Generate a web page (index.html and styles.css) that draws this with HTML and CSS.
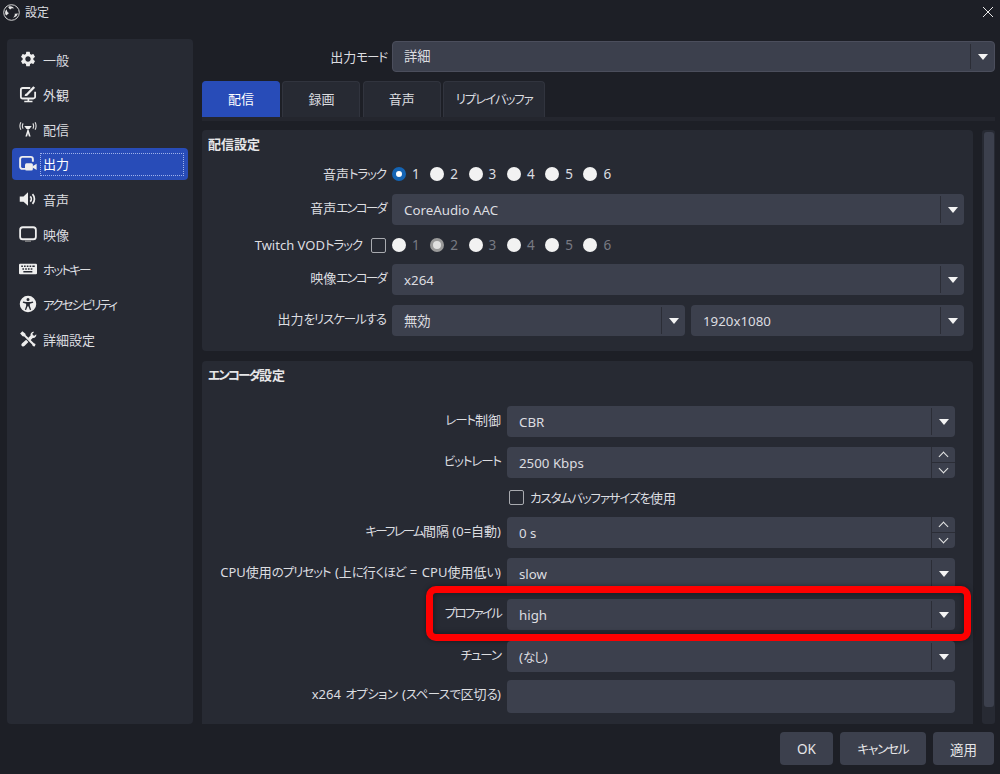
FILE: index.html
```html
<!DOCTYPE html>
<html lang="ja">
<head>
<meta charset="utf-8">
<title>設定</title>
<link rel="stylesheet" href="styles.css">
</head>
<body>
<div class="window">
  <header class="titlebar">
    <svg class="logo" viewBox="0 0 24 24"><circle cx="12" cy="12" r="11" fill="#1d1f26" stroke="#e6e6e6" stroke-width="1.300"/><path d="M7.500 3.800c3.400-1.500 7-.2 8.400 2.800-2-1.200-4.400-.8-5.700 1-1.300-.8-2.500-2-2.700-3.800z" fill="#e6e6e6"/><path d="M20.800 13.200c-.4 3.700-3.400 6.200-6.700 5.800 2.100-1.100 3.100-3.400 2.400-5.500 1.500.5 3.100.4 4.300-.3z" fill="#e6e6e6"/><path d="M4.300 16.300c-2.300-3-1.500-6.900 1.100-8.800-.3 2.400.9 4.600 3 5.300-1.200 1.200-2.300 2.600-4.100 3.500z" fill="#e6e6e6"/></svg>
    <span class="title">設定</span>
    <svg class="close" viewBox="0 0 12 12"><path d="M1 1l10 10M11 1L1 11" stroke="#e8e8e8" stroke-width="1" fill="none"/></svg>
  </header>

  <div class="main">
    <nav class="sidebar">
      <div class="nav-item"><svg class="nav-icon" viewBox="0 0 24 24"><path fill="#eee" d="M19.140 12.940c.04-.3.06-.61.06-.94 0-.32-.02-.64-.07-.94l2.030-1.580a.49.49 0 0 0 .12-.61l-1.920-3.320a.488.488 0 0 0-.59-.22l-2.390.96c-.5-.38-1.030-.7-1.620-.94l-.36-2.540a.484.484 0 0 0-.48-.41h-3.840c-.24 0-.43.17-.47.41l-.36 2.540c-.59.24-1.130.57-1.620.94l-2.390-.96c-.22-.08-.47 0-.59.22L2.740 8.870c-.12.21-.08.47.12.61l2.030 1.580c-.05.3-.09.63-.09.94s.02.64.07.94l-2.030 1.580a.49.49 0 0 0-.12.61l1.920 3.320c.12.22.37.29.59.22l2.390-.96c.5.38 1.030.7 1.620.94l.36 2.540c.05.24.24.41.48.41h3.840c.24 0 .44-.17.47-.41l.36-2.540c.59-.24 1.130-.56 1.620-.94l2.390.96c.22.08.47 0 .59-.22l1.920-3.320c.12-.22.07-.47-.12-.61l-2.010-1.580zM12 15.600c-1.980 0-3.600-1.620-3.600-3.600s1.620-3.600 3.600-3.600 3.600 1.620 3.600 3.600-1.620 3.600-3.600 3.600z"/></svg><span>一般</span></div>
      <div class="nav-item"><svg class="nav-icon" viewBox="0 0 24 24"><path d="M15 4H5a2.500 2.500 0 0 0-2.500 2.500v9A2.500 2.500 0 0 0 5 18h14a2.500 2.500 0 0 0 2.500-2.500V9" fill="none" stroke="#eee" stroke-width="2.400"/><path d="M7 22h11M12.500 18v3" stroke="#eee" stroke-width="2.200"/><path d="M7.500 14.500c.2-2 1-3 2.400-3.200L19 1.500l2.500 2.300-9.500 9.600c-.5 1-2.500 1.600-4.500 1.100z" fill="#eee"/></svg><span>外観</span></div>
      <div class="nav-item"><svg class="nav-icon" viewBox="0 0 24 24"><path d="M12 10.500 8.500 22h2.300l1.200-4.500 1.200 4.500h2.300z" fill="#eee"/><path d="M7 8h10l-3 4h-4z" fill="#eee"/><path d="M5.500 4.500a7 7 0 0 0 0 7M18.500 4.500a7 7 0 0 1 0 7M2.500 3a11 11 0 0 0 0 10M21.500 3a11 11 0 0 1 0 10" fill="none" stroke="#ddd" stroke-width="1.500"/></svg><span>配信</span></div>
      <div class="nav-item active"><svg class="nav-icon" viewBox="0 0 24 24"><path d="M8.500 18.500H4.500a3 3 0 0 1-3-3V5.500a3 3 0 0 1 3-3h11a3 3 0 0 1 3 3V9" fill="none" stroke="#eee" stroke-width="2.600"/><rect x="8" y="11" width="10.500" height="9.500" rx="2" fill="#eee"/><path d="M18 15l5.500-3.500v8.500L18 16.500z" fill="#eee"/></svg><span class="focus-box">出力</span></div>
      <div class="nav-item"><svg class="nav-icon" viewBox="0 0 24 24"><path d="M1 8.500H6L12 3v18l-6-5.500H1z" fill="#eee"/><path d="M15 8.500a5 5 0 0 1 0 7M18 5.500a9.500 9.500 0 0 1 0 13" fill="none" stroke="#eee" stroke-width="2.300"/></svg><span>音声</span></div>
      <div class="nav-item"><svg class="nav-icon" viewBox="0 0 24 24"><rect x="1.500" y="3" width="21" height="16" rx="3.500" fill="none" stroke="#eee" stroke-width="2.400"/><path d="M8 21.500h8" stroke="#999" stroke-width="1.500"/></svg><span>映像</span></div>
      <div class="nav-item"><svg class="nav-icon" viewBox="0 0 24 24"><path fill-rule="evenodd" d="M1.500 5h21A1.500 1.500 0 0 1 24 6.500v11a1.500 1.500 0 0 1-1.500 1.500h-21A1.500 1.500 0 0 1 0 17.500v-11A1.500 1.500 0 0 1 1.500 5zm1.500 2.300v2h2.200v-2zm3.700 0v2h2.200v-2zm3.700 0v2h2.200v-2zm3.700 0v2h2.200v-2zm3.700 0v2H21v-2zM4.500 11v2h2.200v-2zm3.700 0v2h2.200v-2zm3.700 0v2h2.200v-2zm3.700 0v2h2.200v-2zm-9.800 3.800v1.800h12v-1.800z" fill="#eee"/></svg><span><span class="kn">ホットキー</span></span></div>
      <div class="nav-item"><svg class="nav-icon" viewBox="0 0 24 24"><path fill-rule="evenodd" d="M12 1a11 11 0 1 1 0 22 11 11 0 0 1 0-22zm0 3a2 2 0 1 0 0 4 2 2 0 0 0 0-4zM5.500 8.500 5 10.200l4.500 1.300v3l-1.700 5 1.600.6L11.500 15h1l2.100 5.100 1.600-.6-1.700-5v-3l4.500-1.300-.5-1.700c-4.500 1.200-8 1.200-12.500 0z" fill="#eee"/></svg><span><span class="kn">アクセシビリティ</span></span></div>
      <div class="nav-item"><svg class="nav-icon" viewBox="0 0 24 24"><path d="M4.500 1.500 1.500 4.500l3.300 3.800 2.200.3L17.500 19.300c.3 1.700 1.900 3.100 3.700 2.500l.9-3-2.200-1L9 7 8.500 5z" fill="#eee"/><path d="M23 5.500c.6 2.800-1.700 5.500-4.700 5l-3 3-3.100-3 3.200-3.200c-.6-2.800 2-5.500 4.800-4.800l-2.300 2.300.6 2.200 2.200.6zM9.500 13l3 3-4.900 5.100c-1.100 1.200-2.600 1.300-3.700.3-1.100-1.100-1-2.600.3-3.800z" fill="#eee"/></svg><span>詳細設定</span></div>
    </nav>

    <section class="content">
      <div class="mode-row">
        <label class="mode-label">出力<span class="k">モード</span></label>
        <div class="select select-main"><span class="select-text">詳細</span><span class="select-btn"><i class="arrow"></i></span></div>
      </div>

      <div class="tabs">
        <div class="tab tab-active">配信</div>
        <div class="tab">録画</div>
        <div class="tab">音声</div>
        <div class="tab tab-wide"><span class="k">リプレイバッファ</span></div>
      </div>
      <div class="tab-line"></div>

      <div class="pane">
        <div class="panels">
          <div class="panel panel-stream">
            <h2 class="panel-title">配信設定</h2>
            <div class="rows">
              <div class="row row-radio">
                <div class="row-label">音声<span class="k">トラック</span></div>
                <div class="radios">
                  <span class="radio-item"><i class="radio radio-on"></i>1</span>
                  <span class="radio-item"><i class="radio"></i>2</span>
                  <span class="radio-item"><i class="radio"></i>3</span>
                  <span class="radio-item"><i class="radio"></i>4</span>
                  <span class="radio-item"><i class="radio"></i>5</span>
                  <span class="radio-item"><i class="radio"></i>6</span>
                </div>
              </div>
              <div class="row">
                <div class="row-label">音声<span class="kn">エンコーダ</span></div>
                <div class="select"><span class="select-text">CoreAudio AAC</span><span class="select-btn"><i class="arrow"></i></span></div>
              </div>
              <div class="row row-radio row-twitch">
                <div class="row-label">Twitch VOD<span class="k">トラック</span><i class="checkbox"></i></div>
                <div class="radios radios-off">
                  <span class="radio-item"><i class="radio"></i>1</span>
                  <span class="radio-item"><i class="radio radio-dis"></i>2</span>
                  <span class="radio-item"><i class="radio"></i>3</span>
                  <span class="radio-item"><i class="radio"></i>4</span>
                  <span class="radio-item"><i class="radio"></i>5</span>
                  <span class="radio-item"><i class="radio"></i>6</span>
                </div>
              </div>
              <div class="row">
                <div class="row-label">映像<span class="kn">エンコーダ</span></div>
                <div class="select"><span class="select-text">x264</span><span class="select-btn"><i class="arrow"></i></span></div>
              </div>
              <div class="row">
                <div class="row-label">出力<span class="k">をリスケールする</span></div>
                <div class="field-pair">
                  <div class="select select-half"><span class="select-text">無効</span><span class="select-btn"><i class="arrow"></i></span></div>
                  <div class="select select-res"><span class="select-text">1920x1080</span><span class="select-btn"><i class="arrow"></i></span></div>
                </div>
              </div>
            </div>
          </div>

          <div class="panel panel-encoder">
            <h2 class="panel-title"><span class="kn">エンコーダ</span>設定</h2>
            <div class="rows">
              <div class="row">
                <div class="row-label"><span class="k">レート</span>制御</div>
                <div class="select"><span class="select-text">CBR</span><span class="select-btn"><i class="arrow"></i></span></div>
              </div>
              <div class="row">
                <div class="row-label"><span class="k">ビットレート</span></div>
                <div class="select"><span class="select-text">2500 Kbps</span><span class="spin"><span class="spin-btn"><i class="chev chev-up"></i></span><span class="spin-btn"><i class="chev chev-down"></i></span></span></div>
              </div>
              <div class="row row-check">
                <div class="row-label"></div>
                <div class="check-field"><i class="checkbox"></i><span><span class="k">カスタムバッファサイズを</span>使用</span></div>
              </div>
              <div class="row">
                <div class="row-label"><span class="kn">キーフレーム</span>間隔 (0=自動)</div>
                <div class="select"><span class="select-text">0 s</span><span class="spin"><span class="spin-btn"><i class="chev chev-up"></i></span><span class="spin-btn"><i class="chev chev-down"></i></span></span></div>
              </div>
              <div class="row">
                <div class="row-label spaced">CPU使用<span class="k">のプリセット</span> (上<span class="k">に</span>行<span class="k">くほど</span> = CPU使用低<span class="k">い</span>)</div>
                <div class="select"><span class="select-text">slow</span><span class="select-btn"><i class="arrow"></i></span></div>
              </div>
              <div class="row row-profile">
                <div class="row-label"><span class="kn">プロファイル</span></div>
                <div class="select"><span class="select-text">high</span><span class="select-btn"><i class="arrow"></i></span></div>
                <div class="highlight"></div>
              </div>
              <div class="row row-tune">
                <div class="row-label"><span class="k">チューン</span></div>
                <div class="select"><span class="select-text">(<span class="k">なし</span>)</span><span class="select-btn"><i class="arrow"></i></span></div>
              </div>
              <div class="row row-options">
                <div class="row-label spaced">x264 <span class="kw">オプション</span> (<span class="kw">スペースで</span>区切<span class="kw">る</span>)</div>
                <div class="text-input"></div>
              </div>
            </div>
          </div>
        </div>
        <div class="scrollbar"><div class="scroll-thumb"></div></div>
      </div>
    </section>
  </div>

  <footer class="footer">
    <button class="btn btn-ok">OK</button>
    <button class="btn btn-cancel"><span class="k">キャンセル</span></button>
    <button class="btn btn-apply">適用</button>
  </footer>
</div>
</body>
</html>
```

FILE: styles.css
```css
* { box-sizing: border-box; }

html, body {
  margin: 0;
  padding: 0;
  height: 774px;
  overflow: hidden;
  background: #1d1f26;
}

body {
  font-family: "Noto Sans", "Noto Sans CJK JP", sans-serif;
  font-size: 13px;
  font-feature-settings: "palt";
  color: #dcdde0;
}

/* Narrow kana runs */
.k { font-size: 12.5px; letter-spacing: -1.1px; }
.kn { font-size: 12.5px; letter-spacing: -1.8px; }
.kw { font-size: 12.5px; letter-spacing: -.6px; }
.spaced { word-spacing: 1.200px; }

.window {
  width: 1000px;
  height: 774px;
  display: flex;
  flex-direction: column;
}

.titlebar {
  height: 24px;
  flex: none;
  display: flex;
  align-items: center;
  padding: 0 6px 0 3px;
}

.logo { width: 17px; height: 17px; margin-right: 5px; }
.title { font-size: 12px; }
.close { width: 12px; height: 12px; margin-left: auto; margin-right: 0; }

.main {
  height: 685px;
  margin-top: 15px;
  flex: none;
  display: flex;
  padding: 0 5px 0 7px;
}

.sidebar {
  width: 186px;
  flex: none;
  background: #272a33;
  border-radius: 4px;
  padding: 4px 5px;
}

.nav-item {
  height: 32px;
  margin-bottom: 3px;
  display: flex;
  align-items: center;
  padding-left: 7px;
  border-radius: 4px;
  color: #dcdde0;
}

.nav-icon { width: 18px; height: 18px; flex: none; margin-right: 6px; }

.active { background: #284cb8; padding-right: 4px; color: #fff; }

.focus-box {
  flex: 1;
  height: 23px;
  line-height: 21px;
  margin-left: -3px;
  padding-left: 2px;
  border: 1px dotted #9fb2ea;
}

.content {
  flex: 1;
  margin-left: 9px;
  padding-top: 2px;
  min-width: 0;
}

.mode-row { display: flex; align-items: center; height: 31px; }
.mode-label { width: 185px; text-align: right; margin-right: 5px; }

.select {
  flex: 1;
  height: 31px;
  display: flex;
  background: #3c404d;
  border-radius: 4px;
  min-width: 0;
}

.select-main { border: 1px solid #4b4e5c; }
.select-text { flex: 1; padding-left: 12px; line-height: 32px; font-size: 13.300px; }
.select-main .select-text { padding-left: 11px; line-height: 28px; }

.select-btn {
  width: 24px;
  flex: none;
  border-left: 1px solid #2b2d36;
  margin: 2px 0;
  display: flex;
  align-items: center;
  justify-content: center;
}

.arrow {
  width: 0;
  height: 0;
  border-left: 5px solid transparent;
  border-right: 5px solid transparent;
  border-top: 6px solid #f4f4f4;
}

.spin {
  width: 24px;
  flex: none;
  border-left: 1px solid #2b2d36;
  display: flex;
  flex-direction: column;
}

.spin-btn {
  flex: 1;
  display: flex;
  align-items: center;
  justify-content: center;
}

.spin-btn:first-child { border-bottom: 1px solid #2b2d36; }

.chev {
  width: 7px;
  height: 7px;
  border-left: 1.500px solid #e6e6e6;
  border-top: 1.500px solid #e6e6e6;
}

.chev-up { transform: translateY(2px) rotate(45deg); }
.chev-down { transform: translateY(-2px) rotate(225deg); }

.tabs { display: flex; margin-top: 9px; height: 36px; }

.tab {
  width: 78px;
  margin-right: 2.400px;
  background: #272a33;
  border: 1px solid #31343e;
  border-bottom: 0;
  border-radius: 4px 4px 0 0;
  text-align: center;
  line-height: 35px;
}

.tab-active { background: #284cb8; border-color: #284cb8; color: #fff; }
.tab-wide { width: 102px; }

.tab-line { height: 4px; background: #24262e; }

.pane {
  margin-top: 9px;
  height: 594px;
  display: flex;
}

.panels {
  width: 771px;
  flex: none;
  display: flex;
  flex-direction: column;
  gap: 10px;
}

.panel { background: #272a33; border-radius: 4px; }
.panel-stream { height: 221px; }
.panel-encoder { height: 363px; border-radius: 4px 4px 0 0; }

.panel-title {
  margin: 0;
  padding-left: 6px;
  font-size: 13px;
  font-weight: 700;
  line-height: 28px;
  color: #e6e6e8;
}

.panel-stream .panel-title { height: 34px; }
.panel-encoder .panel-title { height: 45px; }

.rows { display: flex; flex-direction: column; gap: 10px; }

.row { display: flex; position: relative; height: 31px; }

.row-label {
  flex: none;
  width: 184px;
  margin-right: 6px;
  text-align: right;
  line-height: 29px;
  white-space: nowrap;
}

.panel-stream .row { padding-right: 9px; }
.panel-encoder .row { padding-right: 18px; }
.panel-encoder .row-label { width: 299px; }

.row-radio { height: 20px; }
.row-radio .row-label { line-height: 20px; }
.row-twitch { height: 19px; }

.radios { display: flex; align-items: center; }

.radio-item {
  width: 38.300px;
  display: flex;
  align-items: center;
  font-size: 13.500px;
}

.radios-off .radio-item { color: #787a83; }

.radio {
  width: 14px;
  height: 14px;
  border-radius: 50%;
  background: #f2f2f2;
  margin-right: 6px;
  flex: none;
}

.radio-on { background: #fff; border: 4.500px solid #1464b4; }
.radio-dis { background: #e0e0e0; border: 3.500px solid #9a9a9a; }

.checkbox {
  display: inline-block;
  width: 15px;
  height: 15px;
  border: 1px solid #a9abb0;
  border-radius: 2px;
  vertical-align: -3px;
  margin-left: 9px;
}

.field-pair { flex: 1; display: flex; gap: 6px; min-width: 0; }
.select-half { flex: none; width: 293px; }
.select-res { flex: 1; }

.row-check { height: 19px; }

.check-field { display: flex; align-items: center; }
.check-field .checkbox { margin: 0 6px 0 2px; }

.row-tune { margin-top: 1px; }
.row-options { margin-top: -2px; height: 33px; }

.text-input { flex: 1; background: #3c404d; border-radius: 4px; }

.highlight {
  position: absolute;
  left: 224px;
  right: 2px;
  top: -13px;
  bottom: -11px;
  border: 7px solid #ff0000;
  border-radius: 10px;
  box-shadow: inset 0 0 6px rgba(0, 0, 0, .45), 0 0 5px rgba(0, 0, 0, .4);
  pointer-events: none;
}

.scrollbar {
  width: 13px;
  margin-left: 9px;
  background: #272a33;
  padding: 2px 1px 17px 2px;
  border-radius: 3px;
}

.scroll-thumb { height: 100%; background: #3c404d; border-radius: 3px; }

.footer {
  flex: 1;
  display: flex;
  justify-content: flex-end;
  padding: 8px 6px 0 0;
  gap: 7px;
}

.btn {
  height: 33px;
  background: #3c404d;
  border: 0;
  border-radius: 4px;
  color: #e6e6e8;
  font: inherit;
  font-size: 13.500px;
  padding: 0;
}

.btn-ok { width: 53px; }
.btn-cancel { width: 86px; }
.btn-apply { width: 61px; }
```
